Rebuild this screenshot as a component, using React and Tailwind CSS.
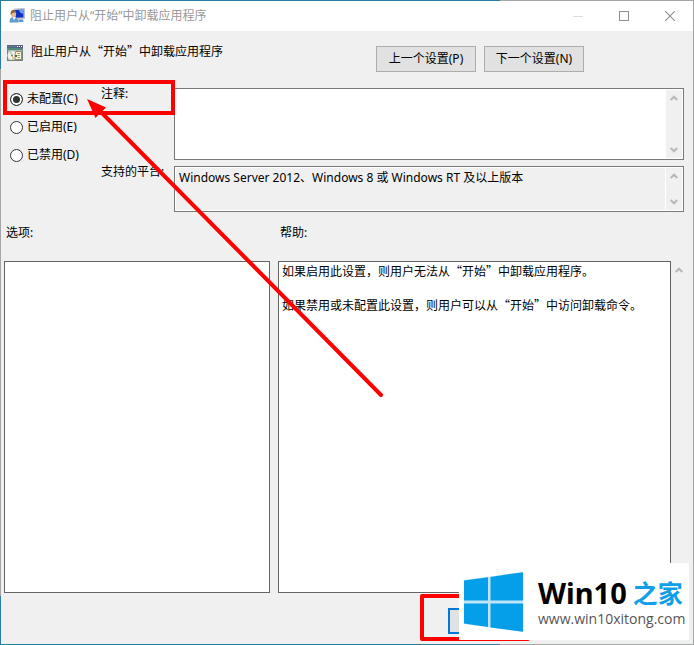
const latinFirst = "font-['Noto_Sans','Noto_Sans_CJK_SC',sans-serif]";
const cjkFirst = "font-['Noto_Sans_CJK_SC',sans-serif]";

function Chevron({ down = false }) {
  return (
    <svg width="8" height="6" viewBox="0 0 8 6" fill="none" aria-hidden="true">
      <path d={down ? "M0.700 1L4 4.300L7.300 1" : "M0.700 5L4 1.700L7.300 5"} stroke="#b8b8b8" strokeWidth="2.200" />
    </svg>
  );
}

function ScrollTrack() {
  return (
    <div className="flex w-4 shrink-0 flex-col items-center justify-between bg-[#f0f0f0] py-[5px]">
      <Chevron />
      <Chevron down />
    </div>
  );
}

function UserScreenIcon() {
  return (
    <svg width="16" height="16" viewBox="0 0 16 16" aria-hidden="true">
      <path d="M5 1L15.500 0.500V10.500L6 11Z" fill="#d5d9dd" stroke="#9aa3ad" strokeWidth="0.600" />
      <path d="M6 2L14.500 1.500V9.500L6.500 9.800Z" fill="#1030c4" />
      <path d="M10 1.800L14.500 1.500V6C12 5.500 10.500 4.500 10 1.800Z" fill="#6f9df0" />
      <path d="M8 11H14L15 14H8Z" fill="#b9bfc6" />
      <path d="M0.500 14.500C0.500 10.500 2 9 4.500 9C7 9 9 10.500 9.500 14.500Z" fill="#5b9bd0" />
      <path d="M3.500 9L5 12.500L7 9Z" fill="#eef4fa" />
      <ellipse cx="4.500" cy="6" rx="2.600" ry="3.300" fill="#e3b98f" />
      <path d="M1.700 7C1.200 3 3 2 4.800 2.100C6.500 2.200 7.200 3.400 7.200 4.800C5 4.300 3.500 4.500 1.700 7Z" fill="#8a6235" />
      <rect x="10" y="12" width="4" height="2" fill="#4c9be0" />
    </svg>
  );
}

function PolicyIcon() {
  return (
    <svg width="16" height="16" viewBox="0 0 16 16" aria-hidden="true">
      <rect width="16" height="16" fill="#6f8584" />
      <rect width="16" height="3" fill="#5b5f80" />
      <rect y="1" width="9" height="1" fill="#4c8594" />
      <rect x="10" y="1" width="1" height="1" fill="#fff" />
      <rect x="12" y="1" width="1" height="1" fill="#fff" />
      <rect x="14" y="1" width="1" height="1" fill="#fff" />
      <rect x="1" y="3" width="14" height="2" fill="#4f8a80" />
      <rect x="1" y="5" width="14" height="10" fill="#aeb7ae" />
      <circle cx="5" cy="10.500" r="4.500" fill="#f0f1ea" />
      <path d="M5 10.500L2 7A4.500 4.500 0 0 1 5 6Z" fill="#b7d7c8" />
      <path d="M5 10.500L8 14A4.500 4.500 0 0 1 5 15Z" fill="#d4cfa0" />
      <circle cx="5" cy="10.500" r="1" fill="#7a8480" />
      <path d="M9 6.500H14.500V14.500H8V9Z" fill="#fbf4d6" stroke="#8c774a" strokeWidth="0.800" />
      <path d="M10.500 8.500H13M10.500 10.500H13M10.500 12.500H13" stroke="#a08a52" strokeWidth="0.900" />
      <rect x="8" y="10" width="2" height="2" fill="#3b6d4e" />
    </svg>
  );
}

function TitleBar() {
  return (
    <header className="flex h-[30px] shrink-0 items-center bg-white pl-2 text-[#999999]">
      <UserScreenIcon />
      <h1 className="ml-[5px] flex-1 text-xs">阻止用户从“开始”中卸载应用程序</h1>
      <button type="button" aria-label="最小化" className="flex h-full w-[46px] items-center justify-center">
        <svg width="10" height="10" viewBox="0 0 10 10"><path d="M0 5.500H10" stroke="#dedede" /></svg>
      </button>
      <button type="button" aria-label="最大化" className="flex h-full w-[46px] items-center justify-center">
        <svg width="10" height="10" viewBox="0 0 10 10"><rect x="0.500" y="0.500" width="9" height="9" fill="none" stroke="#8f8f8f" /></svg>
      </button>
      <button type="button" aria-label="关闭" className="flex h-full w-[46px] items-center justify-center">
        <svg width="10" height="10" viewBox="0 0 10 10"><path d="M0 0L10 10M10 0L0 10" stroke="#8f8f8f" strokeWidth="1.100" /></svg>
      </button>
    </header>
  );
}

function StateOption({ label, value, checked }) {
  return (
    <label className="flex h-[26px] items-center gap-1">
      <input
        type="radio"
        name="state"
        value={value}
        defaultChecked={checked}
        className="size-[13px] appearance-none rounded-full border border-[#333333] bg-white checked:bg-[#333333] checked:shadow-[inset_0_0_0_2px_#ffffff]"
      />
      {label}
    </label>
  );
}

function NavButton({ children }) {
  return (
    <button type="button" className="h-[26px] w-[100px] border border-[#adadad] bg-[#e1e1e1]">
      {children}
    </button>
  );
}

function Watermark() {
  return (
    <div className="absolute right-[5px] bottom-[5px] flex h-[77px] w-[230px] items-center bg-white pl-[5px]">
      <svg width="59" height="60" viewBox="0 0 59 60" aria-hidden="true">
        <path d="M0 8L59 0V60L0 52Z" fill="#bfe4f8" />
        <path d="M0 8.500L24 5.200V28.500H0ZM26.500 4.900L59 0.200V28.500H26.500ZM0 31.500H24V55L0 51.500ZM26.500 31.500H59V59.800L26.500 55.400Z" fill="#049fe8" />
      </svg>
      <div className="ml-[15px] pt-0.5">
        <div className="flex h-8 items-center gap-1.5 font-bold text-black">
          <span className="text-[29px] leading-8">Win10</span>
          <span className="text-[25px] leading-8 text-[#119fe9]">之家</span>
        </div>
        <div className="font-['Open_Sans',sans-serif] text-sm leading-5 text-[#555555]">www.win10xitong.com</div>
      </div>
    </div>
  );
}

export default function App() {
  return (
    <div
      className={`${latinFirst} relative flex min-h-screen flex-col overflow-hidden bg-[linear-gradient(#a6a6a6,#a6a6a6),linear-gradient(90deg,#2b7ca3_72%,#a3a8a6_72%)] bg-[length:1px_527px,100%_100%] bg-[position:0_69px,0_0] bg-no-repeat p-px text-xs text-black`}
    >
      <TitleBar />
      <main className="flex flex-1 flex-col bg-[#f0f0f0]">
        <div className="flex h-[55px] items-start pt-[14px] pr-[109px] pl-1.5">
          <PolicyIcon />
          <h2 className={`${cjkFirst} ml-2 flex-1 leading-3`}>阻止用户从“开始”中卸载应用程序</h2>
          <div className="flex gap-2 pt-px">
            <NavButton>上一个设置(P)</NavButton>
            <NavButton>下一个设置(N)</NavButton>
          </div>
        </div>

        <div className="flex pr-[9px]">
          <fieldset className="flex w-[100px] flex-col gap-0.5 pl-[9px]">
            <StateOption label="未配置(C)" value="none" checked />
            <StateOption label="已启用(E)" value="on" />
            <StateOption label="已禁用(D)" value="off" />
          </fieldset>
          <div className="grid flex-1 grid-cols-[73px_1fr] gap-y-1">
            <label htmlFor="comment">注释:</label>
            <div className="mt-0.5 flex h-[72px] border border-[#7a7a7a] bg-white p-px">
              <textarea id="comment" className="min-w-0 flex-1 resize-none px-1 outline-none" />
              <ScrollTrack />
            </div>
            <label htmlFor="platforms">支持的平台:</label>
            <div className="mt-0.5 flex h-[46px] gap-px border border-[#7a7a7a] bg-white p-px">
              <textarea
                id="platforms"
                readOnly
                value="Windows Server 2012、Windows 8 或 Windows RT 及以上版本"
                className="min-w-0 flex-1 resize-none overflow-hidden bg-[#f0f0f0] px-[3px] pt-0.5 outline-none"
              />
              <ScrollTrack />
            </div>
          </div>
        </div>

        <div className="grid flex-1 grid-cols-[266fr_401fr_16px] grid-rows-[auto_1fr] gap-y-5 pt-[13px] pr-1.5 pl-[3px]">
          <h3 className="pl-0.5">选项:</h3>
          <h3 className="col-span-2 pl-2.5">帮助:</h3>
          <div className="border border-[#646464] bg-white" />
          <div className={`${cjkFirst} ml-2 border border-[#646464] bg-white px-[3px] leading-[17px]`}>
            <p>如果启用此设置，则用户无法从“开始”中卸载应用程序。</p>
            <p className="mt-[17px]">如果禁用或未配置此设置，则用户可以从“开始”中访问卸载命令。</p>
          </div>
          <div className="flex flex-col items-center pt-1.5">
            <Chevron />
          </div>
        </div>

        <footer className="flex h-[51px] shrink-0 items-start justify-end pt-[15px] pr-[170px]">
          <button type="button" aria-label="确定" className="h-[26px] w-[75px] border-2 border-[#0078d7] bg-[#e1e1e1]" />
        </footer>
      </main>

      <div className="pointer-events-none absolute top-20 left-[3px] h-[35px] w-[172px] border-4 border-[#ff0000]" />
      <svg className="pointer-events-none absolute top-[90px] left-20" width="310" height="315" viewBox="80 90 310 315" aria-hidden="true">
        <path d="M101 112L381 395" stroke="#ff0000" strokeWidth="4" strokeLinecap="round" />
        <path d="M87 99L106 107.500L103 110.500L99 114L95.500 118Z" fill="#ff0000" />
      </svg>
      <div className="pointer-events-none absolute right-[164px] bottom-1 h-[47px] w-[110px] rounded-xs border-4 border-[#ff0000]" />
      <Watermark />
    </div>
  );
}
